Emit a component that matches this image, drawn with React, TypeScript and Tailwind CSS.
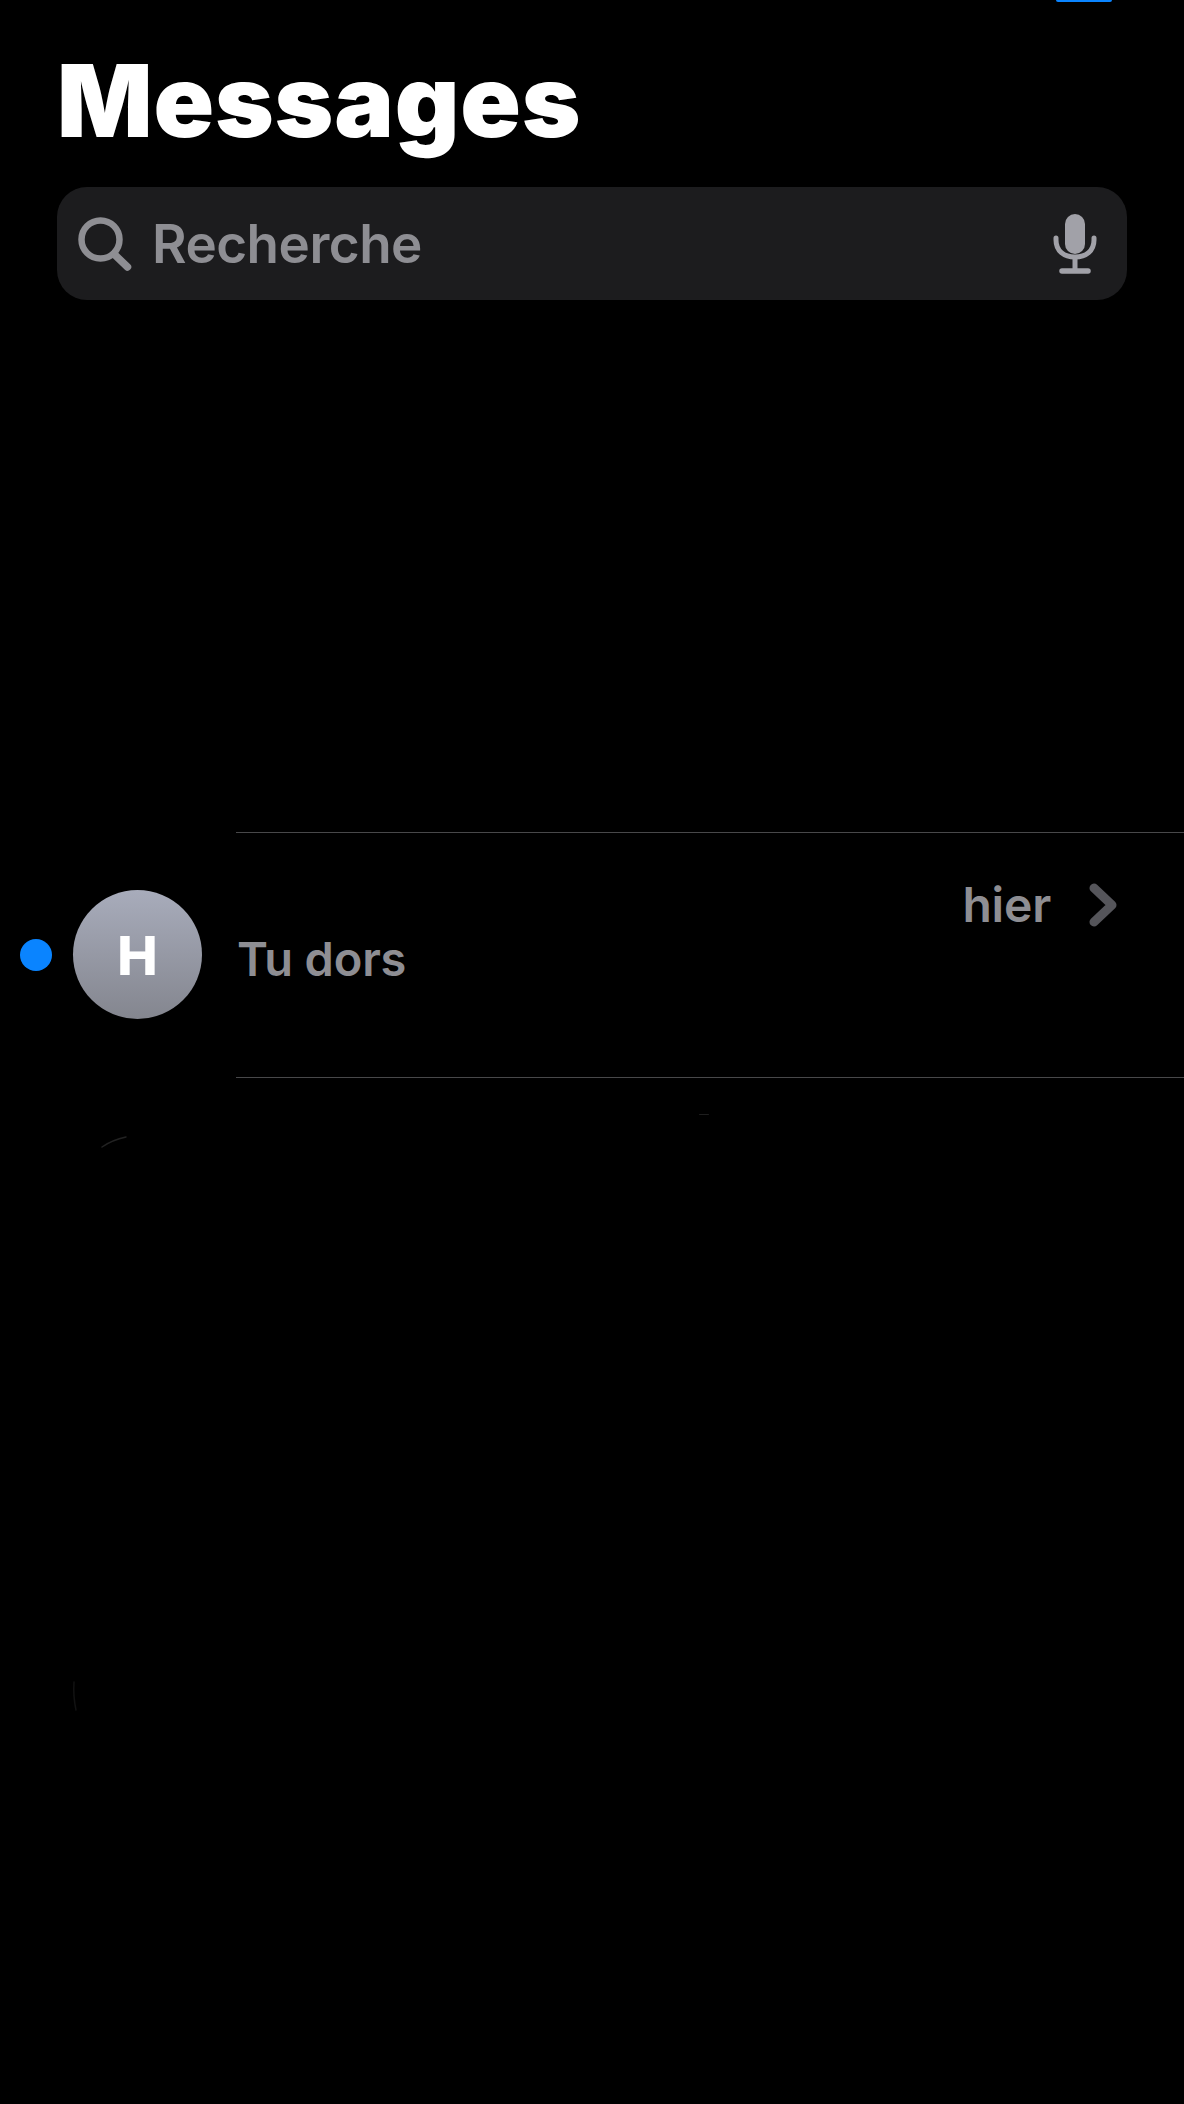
const sans = "font-['Inter',sans-serif]";

function SearchBar() {
  return (
    <div className="mt-[24px] ml-[57px] mr-[57px] flex h-[113px] items-center rounded-[30px] bg-[#1c1c1e] pl-[21px] pr-[30px]">
      <svg width="54" height="54" viewBox="0 0 54 54" fill="none" className="shrink-0">
        <circle cx="22.5" cy="22.5" r="19" stroke="#8e8e93" strokeWidth="6.5" />
        <path d="M36 37 L49.500 50" stroke="#8e8e93" strokeWidth="7.5" strokeLinecap="round" />
      </svg>
      <span className="ml-[20px] flex-1 pt-[2px] text-[53px] leading-none font-semibold tracking-[-0.5px] text-[#8e8e93]">
        Recherche
      </span>
      <svg width="44" height="60" viewBox="0 0 44 60" fill="none" className="shrink-0">
        <rect x="12" y="0" width="20" height="40" rx="10" fill="#a1a1a8" />
        <path d="M3 24 V26 C3 37 11 43 22 43 C33 43 41 37 41 26 V24" stroke="#a1a1a8" strokeWidth="5" strokeLinecap="round" />
        <path d="M22 43 V56" stroke="#a1a1a8" strokeWidth="5" />
        <path d="M9 57 H35" stroke="#a1a1a8" strokeWidth="5.500" strokeLinecap="round" />
      </svg>
    </div>
  );
}

function ConversationRow() {
  return (
    <div className="flex h-[244px] items-start">
      <div className="mt-[106px] ml-[20px] h-[32px] w-[32px] shrink-0 rounded-full bg-[#0a84ff]" />
      <div className="mt-[57px] ml-[21px] flex h-[129px] w-[129px] shrink-0 items-center justify-center rounded-full bg-gradient-to-b from-[#a8acbb] to-[#84868f] pt-[2px] text-[54px] leading-none font-extrabold text-white">
        H
      </div>
      <div className="ml-[35px] flex-1 pr-[67px]">
        <div className="mt-[44px] flex items-center justify-end">
          <span className="text-[48px] leading-[56px] font-semibold tracking-[-0.2px] text-[#8e8e93]">hier</span>
          <svg width="28" height="44" viewBox="0 0 28 44" fill="none" className="ml-[38px]">
            <path d="M5 5 L23 22 L5 39" stroke="#55555a" strokeWidth="9" strokeLinecap="round" strokeLinejoin="round" />
          </svg>
        </div>
        <div className="mt-[-2px] text-[47px] leading-[56px] font-semibold tracking-[-0.2px] text-[#8e8e93]">Tu dors</div>
      </div>
    </div>
  );
}

export default function App() {
  return (
    <main className={`relative min-h-[2104px] bg-black ${sans} text-white`}>
      <div className="absolute top-0 left-[1056px] h-[2px] w-[56px] rounded-b-[3px] bg-[#0a84ff]" />

      <h1 className="ml-[57px] pt-[39px] text-[100px] leading-[124px] font-black tracking-[0.85px]">Messages</h1>

      <SearchBar />

      <div className="mt-[532px] ml-[236px] h-px bg-[#48484a]" />
      <ConversationRow />
      <div className="ml-[236px] h-px bg-[#48484a]" />

      {/* faint leftover marks in the black area */}
      <svg width="120" height="600" viewBox="0 0 120 600" fill="none" className="absolute top-[1130px] left-[60px]">
        <path d="M42 17 Q52 10 66 7" stroke="#222222" strokeWidth="1.500" strokeLinecap="round" />
        <path d="M14 552 Q13 566 16 580" stroke="#121212" strokeWidth="1.500" strokeLinecap="round" />
      </svg>
      <div className="absolute top-[1114px] left-[699px] h-px w-[10px] rounded-full bg-[#1e1e1e]" />
    </main>
  );
}
